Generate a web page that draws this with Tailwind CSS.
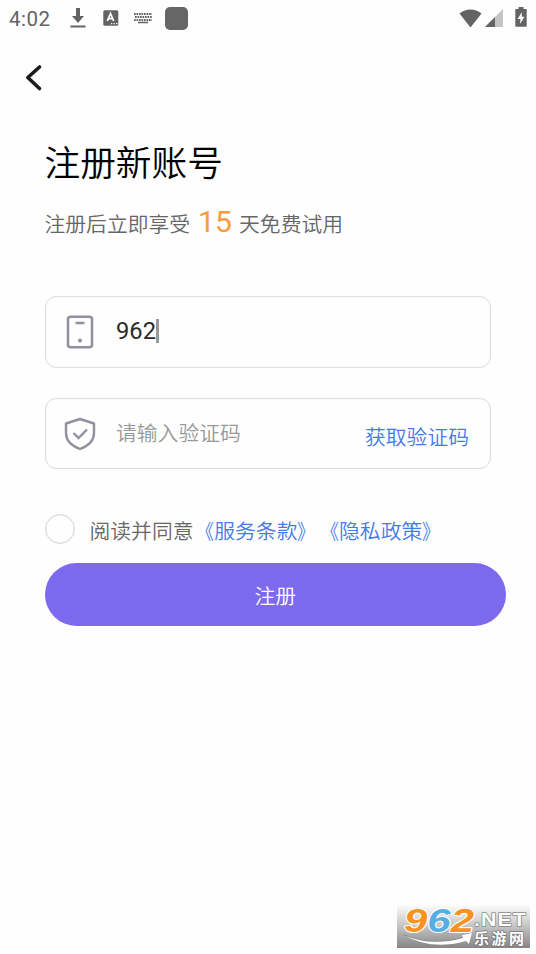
<!DOCTYPE html>
<html lang="zh-CN">
<head>
<meta charset="utf-8">
<title>注册新账号</title>
<script src="https://cdn.jsdelivr.net/npm/@tailwindcss/browser@4"></script>
</head>
<body class="relative w-[536px] h-[954px] overflow-hidden bg-[#fefefe] font-['Noto_Sans_CJK_SC',sans-serif] font-[350]">
  <header class="flex h-9 items-center pl-[9px] pr-[9px] text-[#636363]">
    <span class="w-[61px] font-[Roboto,sans-serif] text-[20.5px] font-normal leading-9 tracking-[0.5px] pt-px">4:02</span>
    <svg class="w-4 h-[22px]" viewBox="0 0 16 22" fill="currentColor"><path d="M6 1h4v8h4l-6 7-6-7h4zM0.500 18.500h15v2H.5z"/></svg>
    <svg class="ml-[17px] w-4 h-4" viewBox="0 0 16 16"><rect x=".3" y=".3" width="15" height="15.500" rx="1.500" fill="currentColor"/><path d="M4.300 11 7.500 3.500 10.700 11M5.500 8.700h4" fill="none" stroke="#fff" stroke-width="1.800"/><path d="M8 13h1.300v1.300H8zM10.500 13h1.300v1.300h-1.300zM13 13h1.300v1.300H13z" fill="#fff"/></svg>
    <svg class="ml-[14px] w-5 h-3" viewBox="0 0 20 12" fill="none" stroke="currentColor"><path d="M1 2h18M2 5h17M1 8h18" stroke-width="1.900" stroke-dasharray="1.700 .8"/><path d="M5 10.500h10" stroke-width="1.500"/></svg>
    <span class="ml-[12px] size-[23px] rounded-[5px] bg-[#666]"></span>
    <svg class="ml-auto w-[23px] h-[19px]" viewBox="0 0 23 19" fill="currentColor"><path d="M.5 4.500C7-.8 16-.8 22.500 4.500L11.500 18.500z"/></svg>
    <svg class="ml-[3px] w-[18px] h-[18px]" viewBox="0 0 18 18"><path d="M0 18 18 0v18z" fill="#c3c3c3"/><path d="M0 18 10 8v10z" fill="currentColor"/></svg>
    <svg class="ml-[12px] -mt-[2px] w-[12px] h-5" viewBox="0 0 12 20"><path d="M3.500 0h5v2H11q.7 0 .7.700V19q0 .7-.7.700H1q-.7 0-.7-.7V2.700Q.3 2 1 2h2.500z" fill="currentColor"/><path d="M7 5 2.500 12H5.500L5 17 9.500 9.800H6.700z" fill="#fff"/></svg>
  </header>
  <nav class="flex h-[84px] items-center pl-[25px]">
    <svg class="w-[18px] h-[28px]" viewBox="0 0 18 28" fill="none" stroke="#1c1c1c" stroke-width="3.600" stroke-linecap="round" stroke-linejoin="round"><path d="M14.500 3 2.800 13.500l11.700 11"/></svg>
  </nav>

  <main class="pl-[44.5px]">
    <h1 class="h-[80px] pt-px text-[35.700px] leading-[80px] text-black">注册新账号</h1>
    <p class="flex h-[48px] text-[20.800px] leading-[47px] text-[#666]">
      <span>注册后立即享受</span>
      <span class="ml-[8px] w-[41px] font-[Roboto,sans-serif] text-[30px] font-normal leading-[43px] text-[#fb9b3d]">15</span>
      <span>天免费试用</span>
    </p>

    <section class="mt-[48px] flex w-[446.5px] flex-col gap-[30px]">
      <div class="flex h-[72px] items-center rounded-[11px] border border-[#dfdfdf] pl-[20.5px] shadow-[inset_0_0_1px_#ddd]">
        <svg class="w-[28px] h-[34px]" viewBox="0 0 28 34" fill="none" stroke="#928fa0" stroke-width="2.500"><rect x="2" y="1.800" width="24" height="30.400" rx="2.500"/><path d="M9.500 8h9"/><circle cx="14" cy="25.500" r="2" fill="#928fa0" stroke="none"/></svg>
        <span class="-mt-[3px] ml-[22px] font-[Roboto,sans-serif] text-[23.700px] font-normal leading-[28px] text-[#2b2b2b]">962</span>
        <span class="-mt-[3px] h-[24px] w-[3px] bg-[#999]"></span>
      </div>
      <div class="flex h-[71px] items-center rounded-[11px] border border-[#dfdfdf] pl-[18.5px] pr-[21px] shadow-[inset_0_0_1px_#ddd]">
        <svg class="w-[32px] h-[34px]" viewBox="0 0 32 34" fill="none" stroke="#928fa0" stroke-width="2.400"><path d="M16 2 30 6.500V16c0 8-6 13-14 16C8 29 2 24 2 16V6.500z" stroke-linejoin="round"/><path d="m9.500 16 5 5 8.500-8.500"/></svg>
        <span class="-mt-[3px] ml-[20px] text-[20.800px] leading-[30px] text-[#999]">请输入验证码</span>
        <button class="ml-auto mt-[5px] text-[20.800px] leading-[30px] text-[#447be9]">获取验证码</button>
      </div>
    </section>

    <div class="mt-[44px] flex h-[32px] items-center text-[20.800px] leading-[32px] text-[#666] [text-spacing-trim:space-all]">
      <span class="size-[30px] shrink-0 rounded-full border border-[#d6d6d6] shadow-[inset_0_0_1px_#ccc]"></span>
      <span class="ml-[15px] pt-px">阅读并同意</span>
      <a class="flex pt-px text-[#447be9]"><span class="origin-right scale-x-[.86]">《</span>服务条款<span class="origin-left scale-x-[.86]">》</span></a>
      <a class="flex pt-px text-[#447be9]"><span class="origin-right scale-x-[.86]">《</span>隐私政策<span class="origin-left scale-x-[.86]">》</span></a>
    </div>
    <button class="mt-[18px] block h-[63px] w-[461.5px] rounded-full bg-[#7d69ee] pt-px text-[20.800px] leading-[63px] text-white">注册</button>
  </main>

  <aside class="absolute left-[397px] top-[905px] flex h-[43px] w-[133px] bg-linear-to-b from-[#fcfcfc] via-[#c4c4c4] to-[#858585]">
    <svg class="h-full w-full overflow-visible" viewBox="0 0 133 43">
      <g paint-order="stroke" stroke-linejoin="round">
        <text x="7" y="27" font-family="Liberation Sans, sans-serif" font-weight="bold" font-style="italic" font-size="33" stroke="#fff" stroke-width="2" textLength="70" lengthAdjust="spacingAndGlyphs"><tspan fill="#f7931e">9</tspan><tspan fill="#55aee5">6</tspan><tspan fill="#f7931e">2</tspan></text>
        <path d="M7 30Q33 42 66 33l-1-3 10-2-3 11-3-3Q34 46 7 30z" fill="#fff" stroke="#777" stroke-width=".6"/>
        <text x="77" y="21" font-family="Liberation Sans, sans-serif" font-weight="bold" font-size="19" letter-spacing="1" fill="#fff" stroke="#888" stroke-width="1.500" textLength="53" lengthAdjust="spacingAndGlyphs">.NET</text>
        <text x="77" y="38.500" font-family="Noto Sans CJK SC, sans-serif" font-weight="bold" font-size="15" fill="#fff" stroke="#777" stroke-width="1.500" textLength="50">乐游网</text>
      </g>
    </svg>
  </aside>
</body>
</html>
